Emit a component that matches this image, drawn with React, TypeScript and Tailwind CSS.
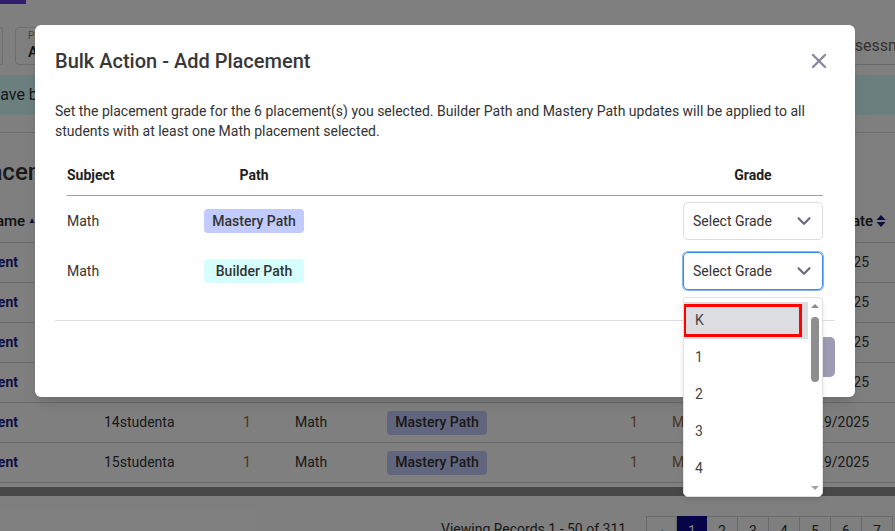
import { ChevronDown, X } from 'lucide-react'

const ROWS = ['10studenta', '11studenta', '12studenta', '13studenta', '14studenta', '15studenta']
const GRADES = ['K', '1', '2', '3', '4', '5', '6']
const PAGES = ['2', '3', '4', '5', '6', '7']

const SortBoth = () => (
  <svg width="10" height="14" viewBox="0 0 10 14">
    <path d="M5 1 9.5 6h-9z" fill="#1a1a8c" />
    <path d="M5 13 9.5 8h-9z" fill="#1a1a8c" />
  </svg>
)

const Background = () => (
  <div className="flex flex-col">
    {/* Tabs */}
    <div className="h-[4px] flex">
      <div className="w-[26px] bg-[#5a3ad6]" />
    </div>

    {/* Filters */}
    <div className="mt-[23px] h-[38px] flex">
      <div className="w-[3px] border border-l-0 border-[#dcdcdc] rounded-r-[4px]" />
      <div className="ml-3 w-[200px] border border-[#dcdcdc] rounded-[4px] pl-3 flex flex-col justify-center">
        <span className="text-[10px] leading-3 text-[#888]">Product</span>
        <span className="text-[15px] leading-5 font-medium text-[#222]">All</span>
      </div>
      <div className="ml-auto w-[71px] overflow-hidden border-b border-[#d0d0d0] flex items-center">
        <span className="ml-[12px] text-[16px] text-[#666] whitespace-nowrap">Assessment</span>
      </div>
    </div>

    {/* Banner */}
    <div className="mt-[10px] h-[40px] bg-[#d6feff] flex items-center overflow-hidden">
      <span className="ml-[-97px] text-[16px] text-[#333] whitespace-nowrap">
        Placements have been successfully updated.
      </span>
    </div>

    <div className="mt-[17px] border-t border-[#d8d8d8]" />

    {/* Heading */}
    <div className="mt-[23px] h-[32px] flex items-center overflow-hidden">
      <span className="ml-[-32px] text-[24px] font-medium text-[#333] whitespace-nowrap">Placements</span>
    </div>

    {/* Table */}
    <div className="mt-[12px] h-[43px] flex items-center border-b border-[#d4d4d4] text-[15px] font-medium text-[#222]">
      <div className="w-[104px]">
        <div className="w-[36px] overflow-hidden flex justify-end items-center gap-[3px] whitespace-nowrap">
          <span>Student Name</span>
          <span className="text-[8px] text-[#1a1a8c]">▲</span>
        </div>
      </div>
      <div className="flex-1 flex justify-end items-center gap-[3px] pr-[9px]">
        <span>Placement Date</span>
        <SortBoth />
      </div>
    </div>
    {ROWS.map((u) => (
      <div key={u} className="h-[40px] flex items-center border-b border-[#d4d4d4] text-[14px] text-[#333]">
        <div className="w-[104px]">
          <div className="w-[18px] overflow-hidden flex justify-end whitespace-nowrap font-bold text-[#1a1a8c]">
            Student
          </div>
        </div>
        <div className="w-[139px]">{u}</div>
        <div className="w-[52px] text-[#946a3c]">1</div>
        <div className="w-[92px]">Math</div>
        <div className="w-[243px]">
          <div className="w-[100px] h-[24px] rounded-[4px] bg-[#c2cbfd] flex items-center justify-center font-medium">
            Mastery Path
          </div>
        </div>
        <div className="w-[42px] text-[#946a3c]">1</div>
        <div className="w-[118px] text-[#946a3c]">Manual</div>
        <div className="flex-1 text-right pr-[26px]">10/29/2025</div>
      </div>
    ))}

    {/* Horizontal scrollbar */}
    <div className="mt-[4px] h-[9px] bg-[#8e8e8e]" />

    {/* Pagination */}
    <div className="mt-[20px] h-[26px] flex items-start pl-[441px] text-[14px] text-[#333]">
      <div className="w-[205px] h-[26px] flex items-center whitespace-nowrap">Viewing Records 1 - 50 of 311</div>
      <div className="flex">
        <div className="w-[31px] h-[30px] border border-[#d4d4d4] flex items-center justify-center text-[#aaa]">‹</div>
        <div className="w-[30px] h-[30px] bg-[#0a0a90] text-white flex items-center justify-center">1</div>
        {PAGES.map((p) => (
          <div key={p} className="w-[31px] h-[30px] border border-l-0 border-[#d4d4d4] flex items-center justify-center">
            {p}
          </div>
        ))}
      </div>
    </div>
  </div>
)

const Badge = ({ label, tone }: { label: string; tone: string }) => (
  <div className={`w-[100px] h-[24px] rounded-[4px] flex items-center justify-center text-[14px] font-medium text-[#333] ${tone}`}>
    {label}
  </div>
)

const SelectBox = ({ focused }: { focused?: boolean }) => (
  <div
    className={
      focused
        ? 'w-[140px] h-[38px] rounded-[5px] border border-[#3b86ee] ring-1 ring-[#3b86ee]/60 flex items-center justify-between pl-[9px] pr-[7px]'
        : 'w-[140px] h-[38px] rounded-[5px] border border-[#dcdcdc] flex items-center justify-between pl-[9px] pr-[7px]'
    }
  >
    <span className="text-[14px] text-[#333]">Select Grade</span>
    <ChevronDown size={22} strokeWidth={2.4} color="#6d6a86" />
  </div>
)

const Modal = () => (
  <div className="absolute left-[35px] top-[25px] w-[820px] bg-white rounded-[6px] shadow-lg px-5 pt-[22px] pb-5 text-[#333]">
    <div className="h-[28px] flex items-center justify-between">
      <h2 className="text-[20px] leading-7 font-medium text-[#383838]">Bulk Action - Add Placement</h2>
      <X size={24} strokeWidth={2.4} color="#8b889f" className="mr-[4px]" />
    </div>

    <p className="mt-[26px] text-[14px] leading-5 text-[#333]">
      Set the placement grade for the 6 placement(s) you selected. Builder Path and Mastery Path updates will be applied to all
      students with at least one Math placement selected.
    </p>

    <div className="mt-[26px] mx-3">
      <div className="grid grid-cols-[137px_100px_1fr_140px] pb-3 border-b border-[#a19dae] text-[14px] leading-4 font-bold text-[#222]">
        <div>Subject</div>
        <div className="text-center">Path</div>
        <div />
        <div className="text-center">Grade</div>
      </div>
      <div className="grid grid-cols-[137px_100px_1fr_140px] h-[50px] items-center text-[14px]">
        <div>Math</div>
        <Badge label="Mastery Path" tone="bg-[#c2cbfd]" />
        <div />
        <SelectBox />
      </div>
      <div className="grid grid-cols-[137px_100px_1fr_140px] h-[50px] items-center text-[14px]">
        <div>Math</div>
        <Badge label="Builder Path" tone="bg-[#d6fefc]" />
        <div />
        <SelectBox focused />
      </div>
    </div>

    <div className="mt-[24px] border-t border-[#dedede]" />

    <div className="pt-4 flex justify-end">
      <button className="w-[80px] h-10 rounded-[5px] bg-[#9d9bb3] text-white text-[14px] font-medium">Apply</button>
    </div>
  </div>
)

const Listbox = () => (
  <div className="absolute left-[683px] top-[297px] w-[140px] h-[200px] bg-white border border-[#e2e2e2] rounded-b-[5px] rounded-t-[3px] shadow-md flex overflow-hidden">
    <div className="flex-1 pt-[4px] text-[14px] text-[#444]">
      {GRADES.map((g) =>
        g === 'K' ? (
          <div key={g} className="relative h-[37px] bg-[#dcdce3] pl-[11px] flex items-center">
            <div className="absolute left-[-1px] top-[2px] right-[6px] bottom-[2px] border-[3px] border-[#ff0000]" />
            <span className="relative">K</span>
          </div>
        ) : (
          <div key={g} className="h-[37px] pl-[11px] flex items-center">
            {g}
          </div>
        ),
      )}
    </div>
    <div className="w-[14px] flex flex-col items-center pt-[6px] pb-[6px]">
      <div className="w-0 h-0 border-l-[4px] border-r-[4px] border-b-[4px] border-l-transparent border-r-transparent border-b-[#8a8a8a]" />
      <div className="mt-[9px] w-[8px] h-[65px] rounded-full bg-[#8e8e8e]" />
      <div className="flex-1" />
      <div className="w-0 h-0 border-l-[4px] border-r-[4px] border-t-[4px] border-l-transparent border-r-transparent border-t-[#a3a3a3]" />
    </div>
  </div>
)

export default function App() {
  return (
    <div className="relative w-[895px] h-[531px] overflow-hidden bg-white font-['Roboto','Liberation_Sans',sans-serif]">
      <Background />
      <div className="absolute inset-0 bg-black/50" />
      <Modal />
      <Listbox />
    </div>
  )
}
